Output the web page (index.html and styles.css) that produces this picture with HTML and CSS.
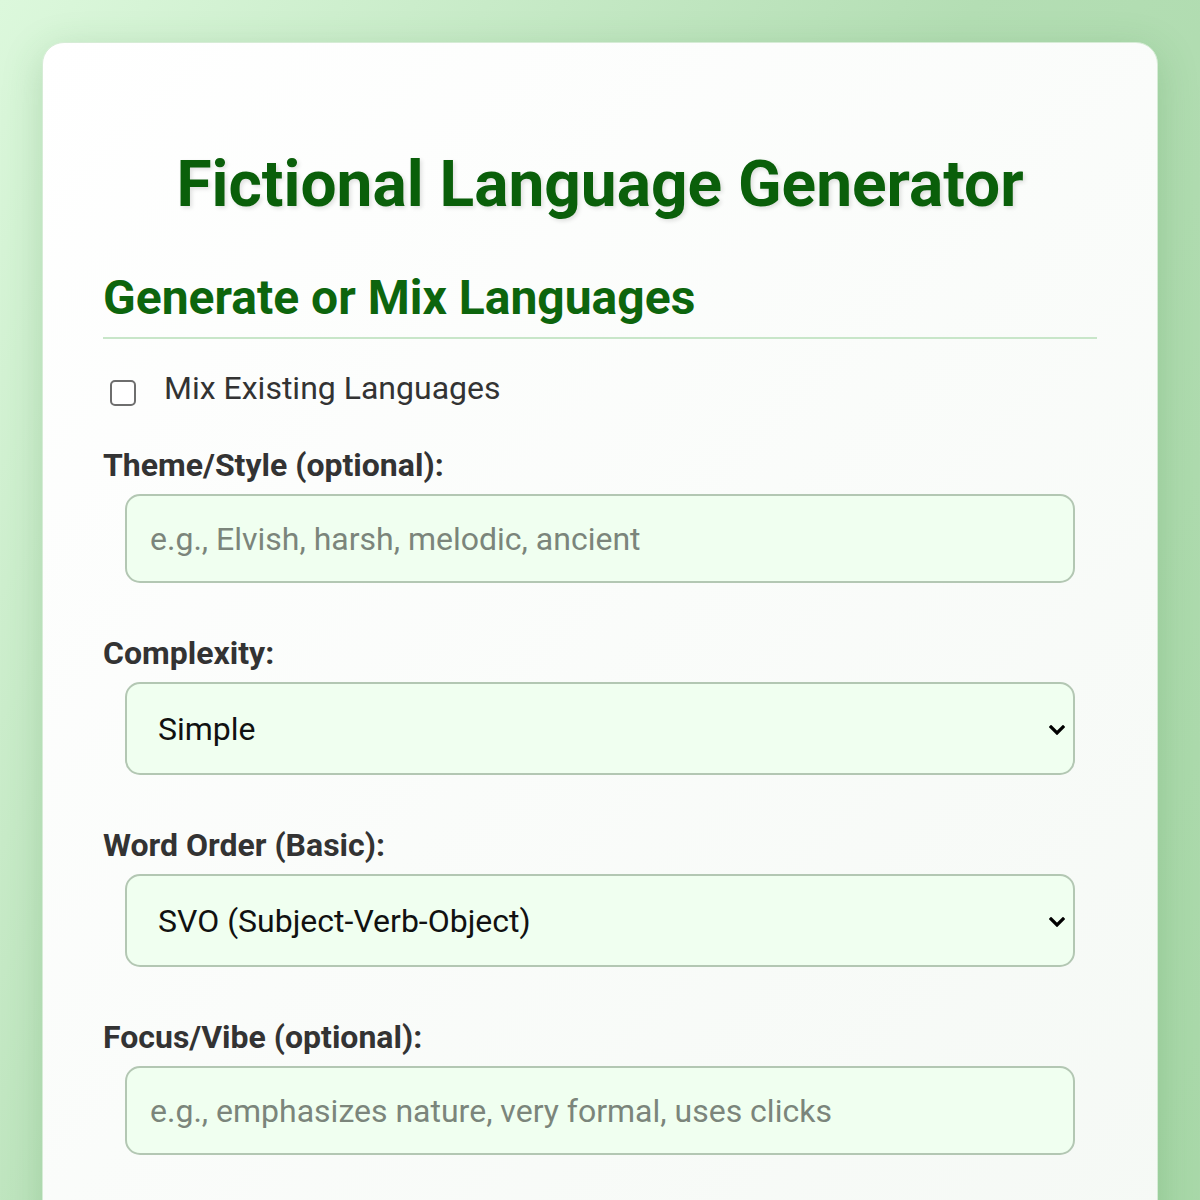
FILE: index.html
```html
<!DOCTYPE html>
<html lang="en">
<head>
<meta charset="utf-8">
<title>Fictional Language Generator</title>
<link rel="stylesheet" href="styles.css">
</head>
<body>
<main class="card">
  <h1 class="title">Fictional Language Generator</h1>
  <section class="section">
    <h2 class="section-title">Generate or Mix Languages</h2>
    <div class="check-row">
      <input type="checkbox" id="mix" class="checkbox">
      <label for="mix" class="check-label">Mix Existing Languages</label>
    </div>
    <div class="field">
      <label class="field-label" for="theme">Theme/Style (optional):</label>
      <div class="control-wrap">
        <input class="control" id="theme" type="text" placeholder="e.g., Elvish, harsh, melodic, ancient">
      </div>
    </div>
    <div class="field">
      <label class="field-label" for="complexity">Complexity:</label>
      <div class="control-wrap">
        <select class="control select" id="complexity">
          <option>Simple</option>
          <option>Moderate</option>
          <option>Complex</option>
        </select>
        <svg class="chevron" width="16" height="10" viewBox="0 0 16 10" aria-hidden="true"><path d="M2 2 L8 8 L14 2" fill="none" stroke="#000" stroke-width="3.2" stroke-linecap="square" stroke-linejoin="miter"/></svg>
      </div>
    </div>
    <div class="field">
      <label class="field-label" for="order">Word Order (Basic):</label>
      <div class="control-wrap">
        <select class="control select" id="order">
          <option>SVO (Subject-Verb-Object)</option>
          <option>SOV (Subject-Object-Verb)</option>
          <option>VSO (Verb-Subject-Object)</option>
        </select>
        <svg class="chevron" width="16" height="10" viewBox="0 0 16 10" aria-hidden="true"><path d="M2 2 L8 8 L14 2" fill="none" stroke="#000" stroke-width="3.2" stroke-linecap="square" stroke-linejoin="miter"/></svg>
      </div>
    </div>
    <div class="field">
      <label class="field-label" for="focus">Focus/Vibe (optional):</label>
      <div class="control-wrap">
        <input class="control" id="focus" type="text" placeholder="e.g., emphasizes nature, very formal, uses clicks">
      </div>
    </div>
  </section>
</main>
</body>
</html>
```

FILE: styles.css
```css
html, body {
  margin: 0;
  padding: 0;
}
body {
  padding: 42px;
  min-height: 100vh;
  box-sizing: border-box;
  background: linear-gradient(120deg, #dcf8dc 0%, #b4deb4 50%, #a8d8a8 100%);
  font-family: Roboto, "Noto Sans", sans-serif;
  color: #333;
}
.card {
  background: linear-gradient(135deg, #ffffff 0%, #f5f9f5 100%);
  border: 1px solid #d6ecd6;
  border-radius: 22px;
  padding: 104px 60px 60px;
  box-shadow: 0 10px 40px rgba(46, 125, 50, 0.22);
}
.title {
  margin: 0 0 45px;
  text-align: center;
  font-size: 64px;
  line-height: 1.2;
  font-weight: 700;
  color: #0a5f0a;
  text-shadow: 2px 2px 4px rgba(0, 0, 0, 0.12);
}
.section-title {
  margin: 0;
  padding-bottom: 11px;
  border-bottom: 2px solid #c8e6c9;
  font-size: 48px;
  line-height: 1.2;
  font-weight: 700;
  color: #0d650d;
}
.check-row {
  display: flex;
  align-items: center;
  margin: 29px 0 38px;
}
.checkbox {
  appearance: none;
  -webkit-appearance: none;
  flex: none;
  width: 26px;
  height: 26px;
  margin: 9px 28px 0 7px;
  border: 2px solid #6e6e6e;
  border-radius: 5px;
  background: #fff;
  box-sizing: border-box;
}
.check-label {
  font-size: 32px;
  line-height: 40px;
  color: #333;
}
.field {
  margin-bottom: 51px;
}
.field-label {
  display: block;
  margin-bottom: 10px;
  font-size: 32px;
  line-height: 38px;
  font-weight: 700;
  color: #333;
}
.control-wrap {
  position: relative;
  margin: 0 22px;
}
.control {
  display: block;
  box-sizing: border-box;
  width: 100%;
  height: 89px;
  margin: 0;
  padding: 0 23px;
  border: 2px solid #b3c7b3;
  border-radius: 15px;
  background: #f0fff0;
  font-family: Roboto, "Noto Sans", sans-serif;
  font-size: 32px;
  color: #111;
  outline: none;
}
.control::placeholder {
  color: #7b857b;
}
.select {
  appearance: none;
  -webkit-appearance: none;
  height: 93px;
  padding-left: 31px;
}
.chevron {
  position: absolute;
  right: 10px;
  top: 50%;
  margin-top: -4px;
  pointer-events: none;
}
```
